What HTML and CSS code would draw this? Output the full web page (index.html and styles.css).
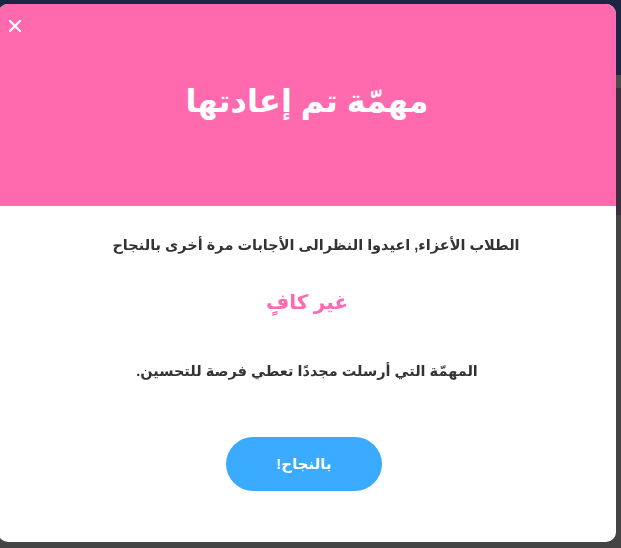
FILE: index.html
```html
<!DOCTYPE html>
<html lang="ar" dir="rtl">
  <head>
    <meta charset="UTF-8" />
    <meta name="viewport" content="width=device-width, initial-scale=1.0" />
    <title>مهمة تم إعادتها</title>
    <link rel="stylesheet" href="styles.css">
  </head>
  <body>
    <div class="page">
      <div class="page__nav"></div>
      <div class="page__strip"></div>
      <div class="page__hero"></div>
    </div>

    <div class="modal">
      <div class="modal__head">
        <a class="modal__close">
          <svg width="12" height="12" viewBox="0 0 12 12">
            <path d="M1 1 L11 11 M11 1 L1 11" stroke="#fff" stroke-width="2.2" stroke-linecap="square" />
          </svg>
        </a>
        <h1 class="modal__title">مهمّة تم إعادتها</h1>
      </div>
      <div class="modal__body">
        <p class="modal__text modal__text--lead">الطلاب الأعزاء, اعيدوا النظرالى الأجابات مرة أخرى بالنجاح</p>
        <p class="modal__grade">غير كافٍ</p>
        <p class="modal__text">المهمّة التي أرسلت مجددًا تعطي فرصة للتحسين.</p>
        <button class="modal__btn">بالنجاح!</button>
      </div>
    </div>
  </body>
</html>
```

FILE: styles.css
```css
* {
  box-sizing: border-box;
}
body {
  margin: 0;
  background-color: #444;
  font-family: Arial, "Liberation Sans", "DejaVu Sans", sans-serif;
  overflow: hidden;
}

/* dimmed page behind the dialog */
.page__nav {
  height: 75px;
  background-color: #1d2545;
}
.page__strip {
  height: 13px;
  background-color: #4b4b4b;
}
.page__hero {
  height: 127px;
  background-color: #3c2e3c;
}

.modal {
  position: fixed;
  top: 4px;
  left: -2px;
  width: 618px;
  height: 538px;
  background-color: #fff;
  border-radius: 10px;
  overflow: hidden;
  display: flex;
  flex-direction: column;
}

.modal__head {
  position: relative;
  height: 202px;
  background-color: #ff69ae;
  display: flex;
  align-items: center;
  justify-content: center;
}

.modal__close {
  position: absolute;
  top: 16px;
  left: 11px;
  line-height: 0;
  cursor: pointer;
}

.modal__title {
  margin: 0 0 8px;
  color: #fff;
  font-size: 32px;
  font-weight: bold;
}

.modal__body {
  display: flex;
  flex-direction: column;
  align-items: center;
  padding-top: 29px;
}

.modal__text {
  margin: 0;
  color: #333;
  font-size: 14.5px;
  line-height: 20px;
  font-weight: bold;
}

.modal__text--lead {
  margin-left: 18px;
}

.modal__grade {
  margin: 33px 0 45px;
  color: #ff69ae;
  font-size: 20px;
  line-height: 28px;
  font-weight: bold;
}

.modal__btn {
  margin-top: 56px;
  margin-right: 6px;
  width: 156px;
  height: 54px;
  border: none;
  border-radius: 27px;
  background-color: #3aabff;
  color: #fff;
  font-family: inherit;
  font-size: 15px;
  font-weight: bold;
  cursor: pointer;
}
```
